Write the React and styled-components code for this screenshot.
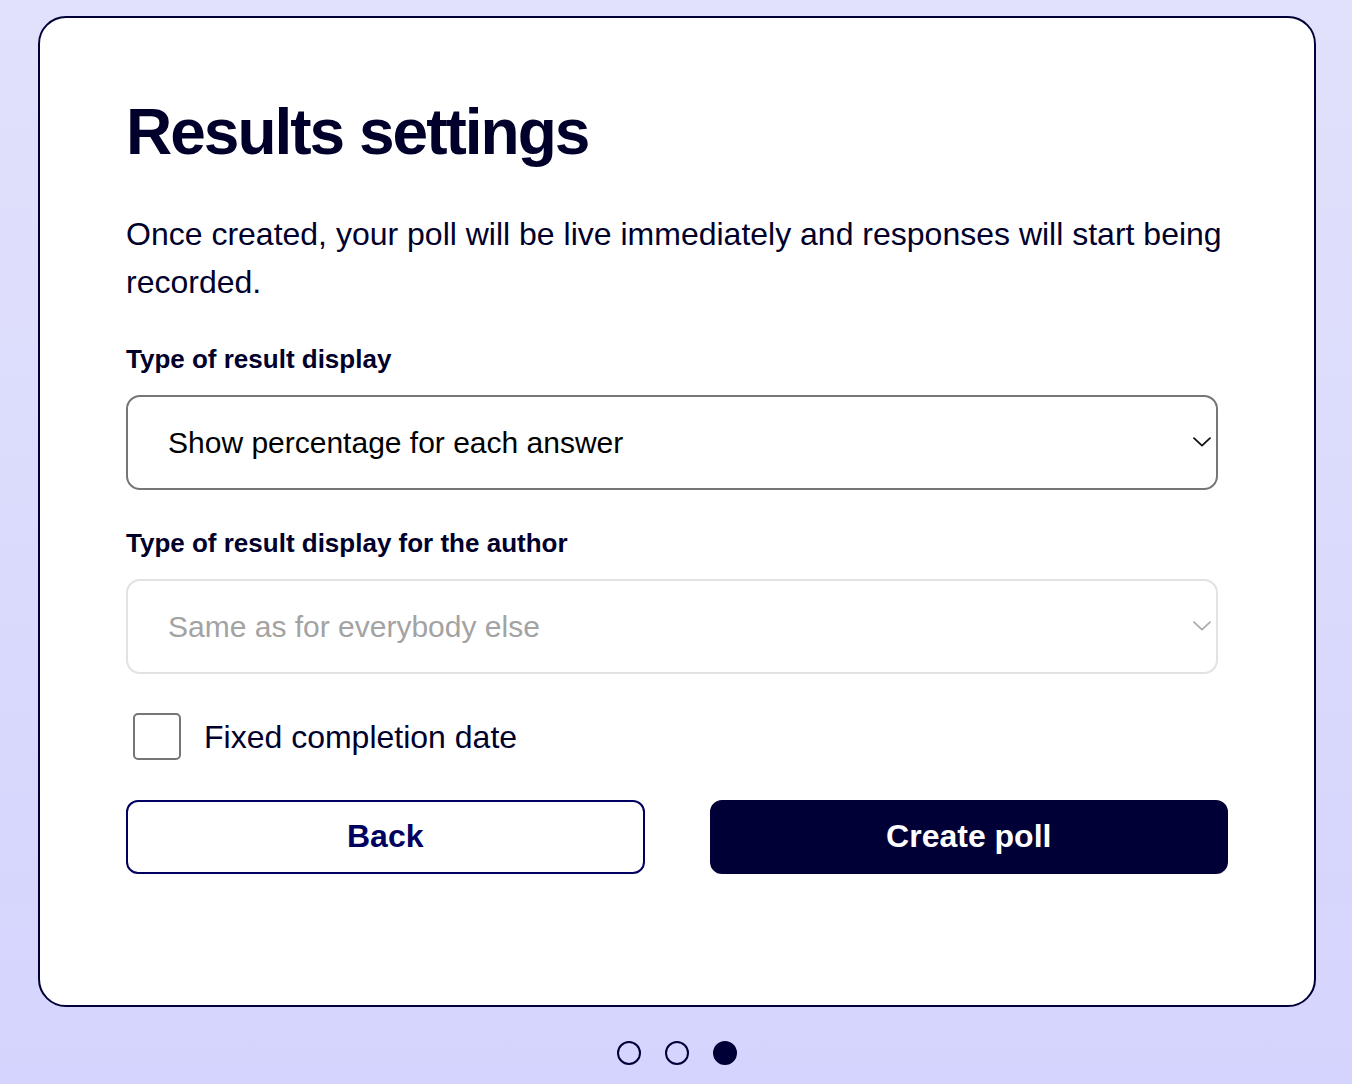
import React from "react";
import styled, { createGlobalStyle } from "styled-components";

const colors = {
  ink: "#00002b",
  navy: "#000060",
  dark: "#000036",
  grey: "#767676",
  faint: "#e2e2e2",
};

const GlobalStyle = createGlobalStyle`
  * {
    box-sizing: border-box;
  }

  html,
  body {
    margin: 0;
    padding: 0;
  }

  body {
    min-height: 1084px;
    background: linear-gradient(180deg, #e1e1fb 0%, #d4d4fe 100%);
    font-family: "Liberation Sans", Arial, sans-serif;
    color: ${colors.ink};
    -webkit-font-smoothing: antialiased;
  }
`;

const Chevron = ({ muted }) => (
  <ChevronIcon width="18" height="10" viewBox="0 0 18 10" $muted={muted}>
    <path
      d="M1 1.2 L9 8.6 L17 1.2"
      fill="none"
      strokeWidth="1.8"
      strokeLinecap="round"
      strokeLinejoin="round"
    />
  </ChevronIcon>
);

const SelectField = ({ label, value, options, disabled }) => (
  <Field>
    <Label>{label}</Label>
    <SelectWrap>
      <Select defaultValue={value} disabled={disabled}>
        {options.map((option) => (
          <option key={option}>{option}</option>
        ))}
      </Select>
      <Chevron muted={disabled} />
    </SelectWrap>
  </Field>
);

export default function App() {
  return (
    <>
      <GlobalStyle />
      <Page>
        <Card>
          <Title>Results settings</Title>
          <Intro>
            Once created, your poll will be live immediately and responses will
            start being recorded.
          </Intro>

          <SelectField
            label="Type of result display"
            value="Show percentage for each answer"
            options={[
              "Show percentage for each answer",
              "Show number of votes",
              "Hide results",
            ]}
          />

          <SelectField
            label="Type of result display for the author"
            value="Same as for everybody else"
            options={["Same as for everybody else"]}
            disabled
          />

          <CheckRow>
            <Checkbox type="checkbox" />
            Fixed completion date
          </CheckRow>

          <Actions>
            <Button type="button" $variant="outline">
              Back
            </Button>
            <Button type="button" $variant="solid">
              Create poll
            </Button>
          </Actions>
        </Card>

        <Steps>
          <Dot />
          <Dot />
          <Dot $active />
        </Steps>
      </Page>
    </>
  );
}

const Page = styled.main`
  display: flex;
  flex-direction: column;
  align-items: center;
  padding: 16px 36px 0 38px;
`;

const Card = styled.section`
  width: 1278px;
  display: flex;
  flex-direction: column;
  background: #ffffff;
  border: 2px solid ${colors.dark};
  border-radius: 28px;
  padding: 76px 86px 131px;
`;

const Title = styled.h1`
  margin: 0 0 39px;
  font-size: 64px;
  line-height: 1.2;
  font-weight: 700;
  letter-spacing: -2px;
  color: ${colors.ink};
`;

const Intro = styled.p`
  margin: 0;
  font-size: 32px;
  line-height: 48px;
  color: ${colors.ink};
`;

const Field = styled.div`
  display: flex;
  flex-direction: column;
  margin-top: 34px;
`;

const Label = styled.label`
  font-size: 26px;
  line-height: 39px;
  font-weight: 700;
  color: ${colors.ink};
  margin-bottom: 16px;
`;

const SelectWrap = styled.div`
  position: relative;
  width: calc(100% - 10px);
`;

const Select = styled.select`
  appearance: none;
  -webkit-appearance: none;
  width: 100%;
  height: 95px;
  padding: 0 60px 0 40px;
  font-family: "Liberation Sans", Arial, sans-serif;
  font-size: 30px;
  color: #000000;
  background: #ffffff;
  border: 2px solid ${colors.grey};
  border-radius: 14px;
  outline: none;

  &:disabled {
    color: #a3a3a3;
    border-color: ${colors.faint};
    opacity: 1;
  }
`;

const ChevronIcon = styled.svg`
  position: absolute;
  right: 7px;
  top: 50%;
  transform: translateY(-50%);
  pointer-events: none;
  stroke: ${(props) => (props.$muted ? "#ababab" : "#111111")};
`;

const CheckRow = styled.label`
  display: flex;
  align-items: center;
  gap: 23px;
  margin-top: 39px;
  padding-left: 7px;
  font-size: 32px;
  line-height: 48px;
  color: ${colors.ink};
`;

const Checkbox = styled.input`
  appearance: none;
  -webkit-appearance: none;
  margin: 0;
  width: 48px;
  height: 47px;
  border: 2px solid ${colors.grey};
  border-radius: 5px;
  background: #ffffff;
`;

const Actions = styled.div`
  display: grid;
  grid-template-columns: 1fr 1fr;
  column-gap: 65px;
  margin-top: 39px;
`;

const Button = styled.button`
  height: 74px;
  border-radius: 12px;
  font-family: "Liberation Sans", Arial, sans-serif;
  font-size: 32px;
  font-weight: 700;
  cursor: pointer;
  border: 2px solid
    ${(props) => (props.$variant === "solid" ? colors.dark : colors.navy)};
  background: ${(props) =>
    props.$variant === "solid" ? colors.dark : "#ffffff"};
  color: ${(props) => (props.$variant === "solid" ? "#ffffff" : colors.navy)};
`;

const Steps = styled.nav`
  display: flex;
  gap: 24px;
  margin-top: 34px;
`;

const Dot = styled.span`
  width: 24px;
  height: 24px;
  border-radius: 50%;
  border: 2px solid ${colors.dark};
  background: ${(props) => (props.$active ? colors.dark : "transparent")};
`;
